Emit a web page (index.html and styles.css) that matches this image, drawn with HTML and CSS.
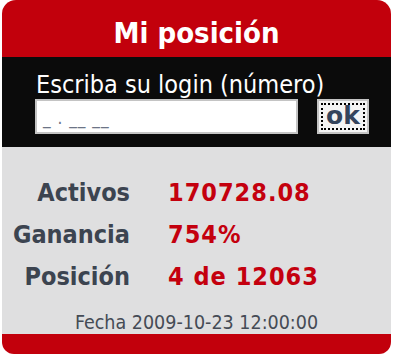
FILE: index.html
```html
<!DOCTYPE html>
<html>
  <head>
    <meta charset="UTF-8" />
    <title>Mi posición</title>
    <link rel="stylesheet" href="styles.css">
  </head>
  <body>
    <div class="widget">
      <div class="header">Mi posición</div>
      <div class="login">
        <div class="login-label">Escriba su login (número)</div>
        <div class="login-row">
          <div class="login-box"><span class="login-value">_ . __ __</span></div>
          <button class="ok-button"><span class="ok-focus">ok</span></button>
        </div>
      </div>
      <div class="stats">
        <div class="stats-grid">
          <div class="label">Activos</div>
          <div class="value">170728.08</div>
          <div class="label">Ganancia</div>
          <div class="value">754%</div>
          <div class="label">Posición</div>
          <div class="value">4 de 12063</div>
        </div>
        <div class="date">Fecha 2009-10-23 12:00:00</div>
      </div>
      <div class="footer"></div>
    </div>
  </body>
</html>
```

FILE: styles.css
```css
* {
  box-sizing: border-box;
}

body {
  margin: 0;
  background: #ffffff;
  font-family: "DejaVu Sans Condensed", "DejaVu Sans", sans-serif;
}

.widget {
  width: 389px;
  margin-left: 2px;
}

.header {
  height: 57px;
  padding-top: 13px;
  background: #c2000c;
  border-radius: 14px 14px 0 0;
  color: #ffffff;
  font-size: 29px;
  font-weight: bold;
  line-height: 40px;
  text-align: center;
}

.login {
  height: 90px;
  padding: 14px 0 0 33px;
  background: #0b0b0b;
}

.login-label {
  color: #ffffff;
  font-size: 25px;
  line-height: 28px;
  padding-left: 1px;
}

.login-row {
  display: flex;
  align-items: flex-start;
  gap: 19px;
}

.login-box {
  width: 263px;
  height: 35px;
  background: #ffffff;
  border: 2px solid #c4c4c4;
  padding: 8px 0 0 6px;
  overflow: hidden;
}

.login-value {
  color: #6c7486;
  font-size: 17px;
  line-height: 17px;
  letter-spacing: 1px;
}

.ok-button {
  width: 52px;
  height: 35px;
  padding: 2px;
  margin: 0;
  background: #f4f4f4;
  border: 2px solid #c4c4c4;
  border-radius: 0;
}

.ok-focus {
  display: flex;
  align-items: flex-end;
  justify-content: center;
  height: 100%;
  border: 2px dotted #000000;
  color: #34445c;
  font-family: "DejaVu Sans", sans-serif;
  font-size: 25px;
  font-weight: bold;
  line-height: 25px;
}

.stats {
  height: 187px;
  padding-top: 25px;
  background: #dfdfe0;
}

.stats-grid {
  display: grid;
  grid-template-columns: 128px auto;
  column-gap: 38px;
  font-size: 25px;
  font-weight: bold;
  line-height: 42px;
}

.label {
  color: #3c4450;
  text-align: right;
}

.value {
  color: #c4000e;
  letter-spacing: 1px;
}

.date {
  margin-top: 14px;
  color: #454b55;
  font-size: 19.5px;
  line-height: 22px;
  text-align: center;
}

.footer {
  height: 20px;
  background: #c2000c;
  border-radius: 0 0 12px 12px;
}
```
